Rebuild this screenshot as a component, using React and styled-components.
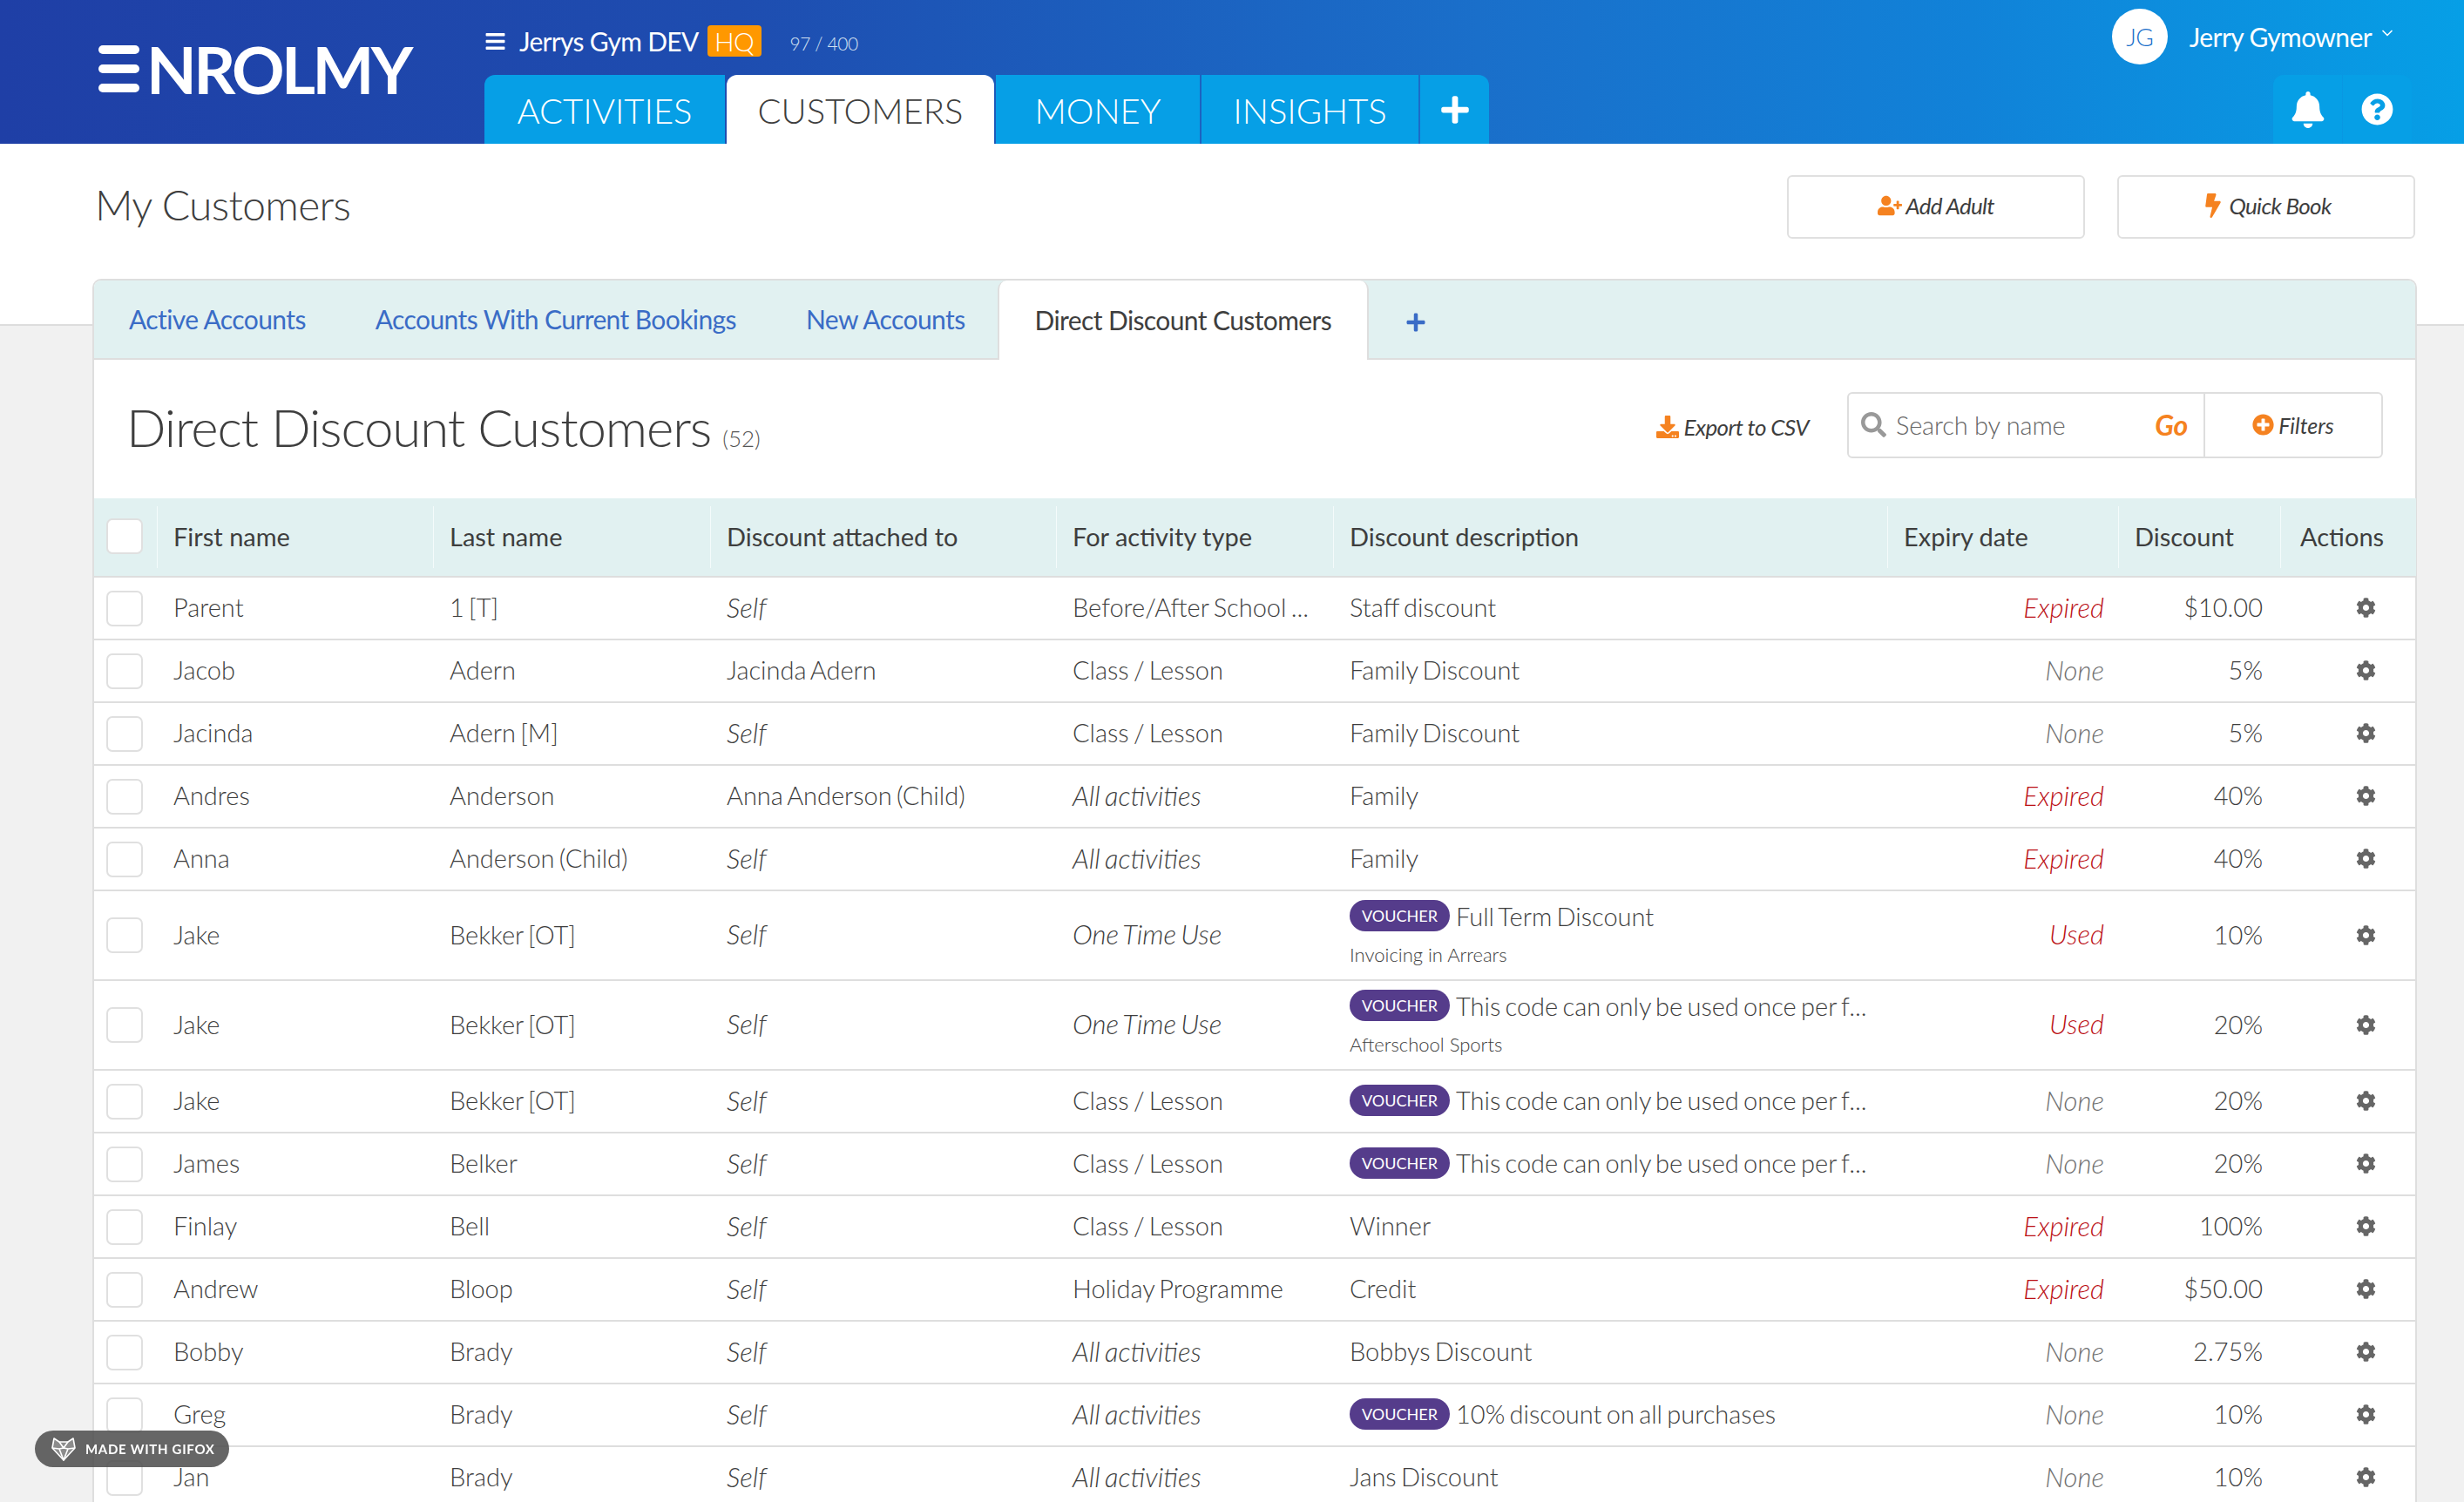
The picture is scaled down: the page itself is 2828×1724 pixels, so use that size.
import React from "react";
import styled, { createGlobalStyle } from "styled-components";
import {
  FaBars,
  FaBell,
  FaBolt,
  FaCog,
  FaDownload,
  FaPlus,
  FaPlusCircle,
  FaQuestionCircle,
  FaSearch,
  FaUserPlus,
} from "react-icons/fa";
import { ChevronDown } from "lucide-react";

const GlobalStyle = createGlobalStyle`
  html, body {
    margin: 0;
    height: 100%;
    overflow: hidden;
    background: #f1f1f1;
    font-family: "Lato", "Liberation Sans", sans-serif;
    color: #3e3e3e;
  }
`;

const Header = styled.header`
  display: flex;
  height: 165px;
  background: linear-gradient(90deg, #1f3fa6 0%, #1e4db0 30%, #1a6fca 60%, #1182d8 80%, #069fe6 100%);
`;

const LogoBox = styled.div`
  width: 556px;
  flex: none;
  display: flex;
  align-items: center;
  padding: 0 0 0 113px;
  box-sizing: border-box;
  gap: 8px;
  height: 158px;
`;

const LogoBars = styled.div`
  display: flex;
  flex-direction: column;
  justify-content: space-between;
  width: 47px;
  height: 54px;
  span {
    display: block;
    height: 10px;
    background: #fff;
    border-radius: 5px;
  }
`;

const LogoText = styled.span`
  font-size: 75px;
  line-height: 54px;
  font-weight: 700;
  color: #fff;
  letter-spacing: -3.6px;
`;

const NavColumn = styled.div`
  flex: 1;
  display: flex;
  flex-direction: column;
`;

const AccountRow = styled.div`
  height: 86px;
  box-sizing: border-box;
  padding-top: 8px;
  display: flex;
  align-items: center;
  color: #fff;
  font-size: 30px;
  letter-spacing: -0.7px;
  svg {
    font-size: 25px;
    margin-right: 15px;
  }
`;

const HqBadge = styled.span`
  margin-left: 10px;
  width: 62px;
  height: 36px;
  line-height: 36px;
  text-align: center;
  background: #ff9800;
  border-radius: 4px;
  font-weight: 300;
`;

const Quota = styled.span`
  margin-left: 33px;
  margin-top: 4px;
  font-size: 21px;
  font-weight: 300;
  letter-spacing: -0.4px;
  color: #d5e2f2;
`;

const MainTabs = styled.nav`
  display: flex;
  gap: 2px;
  height: 79px;
`;

const MainTab = styled.div`
  width: ${(p) => p.$width}px;
  padding-top: 2px;
  box-sizing: border-box;
  display: flex;
  align-items: center;
  justify-content: center;
  font-size: 40px;
  font-weight: 300;
  background: ${(p) => (p.$active ? "#fff" : "#069fe6")};
  color: ${(p) => (p.$active ? "#3e3e3e" : "#fff")};
  border-radius: ${(p) => (p.$active ? "12px 12px 0 0" : p.$first ? "12px 0 0 0" : "0")};
`;

const AddTab = styled(MainTab)`
  width: 79px;
  padding: 0;
  border-radius: 0 12px 0 0;
  font-size: 36px;
`;

const UserColumn = styled.div`
  width: 460px;
  flex: none;
  box-sizing: border-box;
  padding-right: 60px;
  display: flex;
  flex-direction: column;
  align-items: flex-end;
`;

const UserRow = styled.div`
  height: 86px;
  box-sizing: border-box;
  padding: 0 18px 2px 0;
  display: flex;
  align-items: center;
  color: #fff;
  font-size: 30px;
  letter-spacing: -0.6px;
  white-space: nowrap;
`;

const Avatar = styled.div`
  width: 64px;
  height: 64px;
  margin-right: 25px;
  border-radius: 50%;
  background: #fff;
  color: #1a6fca;
  font-size: 28px;
  font-weight: 300;
  display: flex;
  align-items: center;
  justify-content: center;
`;

const UserChevron = styled(ChevronDown)`
  margin: -8px 0 0 8px;
`;

const IconTabs = styled.div`
  display: flex;
  gap: 1px;
  height: 79px;
`;

const IconTab = styled.div`
  width: 79px;
  display: flex;
  align-items: center;
  justify-content: center;
  color: #fff;
  font-size: ${(p) => (p.$first ? 42 : 37)}px;
  background: #069fe6;
  border-radius: ${(p) => (p.$first ? "12px 0 0 0" : "0 12px 0 0")};
`;

const Main = styled.main`
  height: 1559px;
  overflow: hidden;
  box-sizing: border-box;
  padding: 0 54px 0 106px;
  background: linear-gradient(#fff 0 207px, #ddd 207px 209px, #f1f1f1 209px);
`;

const PageHead = styled.div`
  height: 155px;
  box-sizing: border-box;
  padding: 36px 2px 0 3px;
  display: flex;
  justify-content: space-between;
`;

const PageTitle = styled.h1`
  margin: 0;
  font-size: 48px;
  line-height: 68px;
  font-weight: 300;
  letter-spacing: -0.7px;
`;

const PageActions = styled.div`
  display: flex;
  gap: 37px;
`;

const ActionButton = styled.button`
  width: 342px;
  height: 73px;
  padding-bottom: 5px;
  background: #fff;
  border: 2px solid #e0e0e0;
  border-radius: 6px;
  font: italic 400 26px "Lato", sans-serif;
  letter-spacing: -0.7px;
  color: #3e3e3e;
  display: flex;
  align-items: center;
  justify-content: center;
  gap: 4px;
  svg {
    color: #f58220;
    font-size: 28px;
  }
`;

const Card = styled.section`
  background: #fff;
  border: 2px solid #dedede;
  border-bottom: 0;
  border-radius: 10px 10px 0 0;
`;

const CardTabs = styled.div`
  height: 91px;
  box-sizing: border-box;
  display: flex;
  align-items: stretch;
  background: #e1f1f1;
  border-bottom: 2px solid #dedede;
  border-radius: 8px 8px 0 0;
`;

const CardTab = styled.div`
  padding: 0 40px 2px;
  display: flex;
  align-items: center;
  font-size: 30px;
  letter-spacing: -0.6px;
  color: ${(p) => (p.$active ? "#3e3e3e" : "#3a6cc6")};
  ${(p) =>
    p.$active &&
    `
    padding: 0 41px 2px;
    margin: 0 0 -2px -3px;
    background: #fff;
    border: 2px solid #dedede;
    border-width: 0 2px;
    border-radius: 10px 10px 0 0;
  `}
`;

const CardAdd = styled.div`
  margin-left: 42px;
  padding-top: 6px;
  display: flex;
  align-items: center;
  color: #3a6cc6;
  font-size: 24px;
`;

const TitleRow = styled.div`
  height: 159px;
  box-sizing: border-box;
  padding: 0 37px 0 37px;
  display: flex;
  align-items: center;
`;

const ListTitle = styled.h2`
  margin: -6px 0 0;
  flex: 1;
  font-size: 60px;
  font-weight: 300;
  letter-spacing: -1.15px;
  small {
    margin-left: 13px;
    font-size: 26px;
    letter-spacing: 0;
    color: #555;
  }
`;

const ExportLink = styled.div`
  margin: -6px 44px 0 0;
  display: flex;
  align-items: center;
  gap: 6px;
  font-size: 26px;
  font-style: italic;
  letter-spacing: -0.6px;
  svg {
    color: #f58220;
  }
`;

const SearchBox = styled.div`
  width: 615px;
  height: 76px;
  margin-top: -10px;
  box-sizing: border-box;
  border: 2px solid #dedede;
  border-radius: 6px;
  display: flex;
  align-items: center;
`;

const SearchField = styled.div`
  flex: 1;
  height: 100%;
  box-sizing: border-box;
  padding: 0 18px 0 14px;
  border-right: 2px solid #dedede;
  display: flex;
  align-items: center;
  font-size: 29px;
  font-weight: 300;
  letter-spacing: -0.2px;
  color: #666;
  svg {
    color: #999;
    margin-right: 11px;
  }
`;

const GoLabel = styled.span`
  margin-left: auto;
  color: #f58220;
  font-size: 32px;
  font-weight: 700;
  font-style: italic;
`;

const FiltersButton = styled.div`
  width: 202px;
  display: flex;
  align-items: center;
  justify-content: center;
  gap: 5px;
  font-size: 25px;
  font-style: italic;
  svg {
    color: #f58220;
  }
`;

const Table = styled.table`
  width: 100%;
  table-layout: fixed;
  border-collapse: separate;
  border-spacing: 0;
  font-size: 29px;
  font-weight: 300;
`;

const HeadCell = styled.th`
  position: relative;
  height: 91px;
  box-sizing: border-box;
  padding: 0 0 3px ${(p) => p.$inset ?? 19}px;
  text-align: left;
  font-weight: 400;
  background: #e1f1f1;
  border-bottom: 2px solid #dedede;
  &::before {
    content: "";
    display: ${(p) => (p.$plain ? "none" : "block")};
    position: absolute;
    left: 0;
    top: 9px;
    bottom: 9px;
    width: 1px;
    background: #f4fbfb;
  }
`;

const Row = styled.tr`
  height: ${(p) => (p.$tall ? 103 : 72)}px;
`;

const Cell = styled.td`
  box-sizing: border-box;
  padding: 0 ${(p) => p.$right || 0}px 3px ${(p) => (p.$right ? 0 : 19)}px;
  border-bottom: 2px solid #dedede;
  text-align: ${(p) => (p.$right ? "right" : "left")};
  font-style: ${(p) => (p.$italic ? "italic" : "normal")};
  font-size: ${(p) => (p.$italic ? 31 : 29)}px;
  word-spacing: -2.6px;
  color: ${(p) => p.$color || "#3e3e3e"};
  white-space: nowrap;
`;

const CheckCell = styled(Cell)`
  padding: 0 0 0 14px;
`;

const GearCell = styled(Cell)`
  padding: 4px 0 0;
  text-align: center;
  color: #666;
  font-size: 23px;
  svg {
    margin-left: 40px;
  }
`;

const CheckBox = styled.div`
  width: 42px;
  height: 41px;
  box-sizing: border-box;
  background: #fff;
  border: 2px solid #e0e0e0;
  border-radius: 7px;
`;

const DescLine = styled.div`
  display: flex;
  align-items: center;
  gap: 7px;
  height: 36px;
`;

const VoucherPill = styled.span`
  width: 115px;
  height: 36px;
  line-height: 36px;
  text-align: center;
  background: #553c8b;
  color: #fff;
  border-radius: 18px;
  font-size: 18px;
  font-weight: 400;
`;

const SubLine = styled.div`
  margin-top: 12px;
  line-height: 30px;
  font-size: 22px;
  word-spacing: 0;
`;

const GifoxBadge = styled.div`
  position: fixed;
  left: 40px;
  bottom: 40px;
  width: 223px;
  height: 42px;
  box-sizing: border-box;
  padding-left: 18px;
  border-radius: 21px;
  background: rgba(75, 75, 75, 0.85);
  color: #fff;
  display: flex;
  align-items: center;
  gap: 10px;
  font: 700 15px "Lato", sans-serif;
  letter-spacing: 0.7px;
  white-space: nowrap;
`;

const COLUMNS = [
  ["First name", 317],
  ["Last name", 318],
  ["Discount attached to", 397],
  ["For activity type", 318],
  ["Discount description", 636],
  ["Expiry date", 265],
  ["Discount", 186],
  ["Actions", 156, 23],
];

const LONG_CODE = "This code can only be used once per f...";

const ROWS = [
  { first: "Parent", last: "1 [T]", to: "Self", type: "Before/After School ...", desc: "Staff discount", expiry: "Expired", amount: "$10.00" },
  { first: "Jacob", last: "Adern", to: "Jacinda Adern", type: "Class / Lesson", desc: "Family Discount", expiry: "None", amount: "5%" },
  { first: "Jacinda", last: "Adern [M]", to: "Self", type: "Class / Lesson", desc: "Family Discount", expiry: "None", amount: "5%" },
  { first: "Andres", last: "Anderson", to: "Anna Anderson (Child)", type: "All activities", desc: "Family", expiry: "Expired", amount: "40%" },
  { first: "Anna", last: "Anderson (Child)", to: "Self", type: "All activities", desc: "Family", expiry: "Expired", amount: "40%" },
  { first: "Jake", last: "Bekker [OT]", to: "Self", type: "One Time Use", desc: "Full Term Discount", voucher: true, sub: "Invoicing in Arrears", expiry: "Used", amount: "10%" },
  { first: "Jake", last: "Bekker [OT]", to: "Self", type: "One Time Use", desc: LONG_CODE, voucher: true, sub: "Afterschool Sports", expiry: "Used", amount: "20%" },
  { first: "Jake", last: "Bekker [OT]", to: "Self", type: "Class / Lesson", desc: LONG_CODE, voucher: true, expiry: "None", amount: "20%" },
  { first: "James", last: "Belker", to: "Self", type: "Class / Lesson", desc: LONG_CODE, voucher: true, expiry: "None", amount: "20%" },
  { first: "Finlay", last: "Bell", to: "Self", type: "Class / Lesson", desc: "Winner", expiry: "Expired", amount: "100%" },
  { first: "Andrew", last: "Bloop", to: "Self", type: "Holiday Programme", desc: "Credit", expiry: "Expired", amount: "$50.00" },
  { first: "Bobby", last: "Brady", to: "Self", type: "All activities", desc: "Bobbys Discount", expiry: "None", amount: "2.75%" },
  { first: "Greg", last: "Brady", to: "Self", type: "All activities", desc: "10% discount on all purchases", voucher: true, expiry: "None", amount: "10%" },
  { first: "Jan", last: "Brady", to: "Self", type: "All activities", desc: "Jans Discount", expiry: "None", amount: "10%" },
];

const ITALIC_TYPES = ["All activities", "One Time Use"];

function GifoxIcon() {
  return (
    <svg width="30" height="30" viewBox="0 0 30 30" fill="none" stroke="#fff" strokeWidth="1.6" strokeLinejoin="round">
      <path d="M4 3l6 4h10l6-4 2 11-13 14L2 14z" fill="rgba(255,255,255,.25)" />
      <path d="M10 7l5 7 5-7M2 14l8 1 5 13 5-13 8-1M10 15l5-1 5 1" />
    </svg>
  );
}

function CustomerRow({ row }) {
  const expiryColor = row.expiry === "None" ? "#707070" : "#bb1016";
  return (
    <Row $tall={Boolean(row.sub)}>
      <CheckCell>
        <CheckBox />
      </CheckCell>
      <Cell>{row.first}</Cell>
      <Cell>{row.last}</Cell>
      <Cell $italic={row.to === "Self"}>{row.to}</Cell>
      <Cell $italic={ITALIC_TYPES.includes(row.type)}>{row.type}</Cell>
      <Cell>
        {row.voucher ? (
          <DescLine>
            <VoucherPill>VOUCHER</VoucherPill>
            {row.desc}
          </DescLine>
        ) : (
          row.desc
        )}
        {row.sub && <SubLine>{row.sub}</SubLine>}
      </Cell>
      <Cell $right={16} $italic $color={expiryColor}>
        {row.expiry}
      </Cell>
      <Cell $right={20}>{row.amount}</Cell>
      <GearCell>
        <FaCog />
      </GearCell>
    </Row>
  );
}

export default function App() {
  return (
    <>
      <GlobalStyle />
      <Header>
        <LogoBox>
          <LogoBars>
            <span />
            <span />
            <span />
          </LogoBars>
          <LogoText>NROLMY</LogoText>
        </LogoBox>
        <NavColumn>
          <AccountRow>
            <FaBars />
            Jerrys Gym DEV
            <HqBadge>HQ</HqBadge>
            <Quota>97 / 400</Quota>
          </AccountRow>
          <MainTabs>
            <MainTab $first $width={276}>ACTIVITIES</MainTab>
            <MainTab $active $width={307}>CUSTOMERS</MainTab>
            <MainTab $width={234}>MONEY</MainTab>
            <MainTab $width={249}>INSIGHTS</MainTab>
            <AddTab>
              <FaPlus />
            </AddTab>
          </MainTabs>
        </NavColumn>
        <UserColumn>
          <UserRow>
            <Avatar>JG</Avatar>
            Jerry Gymowner
            <UserChevron size={20} strokeWidth={2} />
          </UserRow>
          <IconTabs>
            <IconTab $first>
              <FaBell />
            </IconTab>
            <IconTab>
              <FaQuestionCircle />
            </IconTab>
          </IconTabs>
        </UserColumn>
      </Header>
      <Main>
        <PageHead>
          <PageTitle>My Customers</PageTitle>
          <PageActions>
            <ActionButton>
              <FaUserPlus />
              Add Adult
            </ActionButton>
            <ActionButton>
              <FaBolt />
              Quick Book
            </ActionButton>
          </PageActions>
        </PageHead>
        <Card>
          <CardTabs>
            <CardTab>Active Accounts</CardTab>
            <CardTab>Accounts With Current Bookings</CardTab>
            <CardTab>New Accounts</CardTab>
            <CardTab $active>Direct Discount Customers</CardTab>
            <CardAdd>
              <FaPlus />
            </CardAdd>
          </CardTabs>
          <TitleRow>
            <ListTitle>
              Direct Discount Customers<small>(52)</small>
            </ListTitle>
            <ExportLink>
              <FaDownload />
              Export to CSV
            </ExportLink>
            <SearchBox>
              <SearchField>
                <FaSearch />
                Search by name
                <GoLabel>Go</GoLabel>
              </SearchField>
              <FiltersButton>
                <FaPlusCircle />
                Filters
              </FiltersButton>
            </SearchBox>
          </TitleRow>
          <Table>
            <colgroup>
              <col style={{ width: 72 }} />
              {COLUMNS.map(([label, width]) => (
                <col key={label} style={{ width }} />
              ))}
            </colgroup>
            <thead>
              <tr>
                <HeadCell $plain $inset={14}>
                  <CheckBox />
                </HeadCell>
                {COLUMNS.map(([label, , inset]) => (
                  <HeadCell key={label} $inset={inset}>
                    {label}
                  </HeadCell>
                ))}
              </tr>
            </thead>
            <tbody>
              {ROWS.map((row, index) => (
                <CustomerRow key={index} row={row} />
              ))}
            </tbody>
          </Table>
        </Card>
      </Main>
      <GifoxBadge>
        <GifoxIcon />
        MADE WITH GIFOX
      </GifoxBadge>
    </>
  );
}
